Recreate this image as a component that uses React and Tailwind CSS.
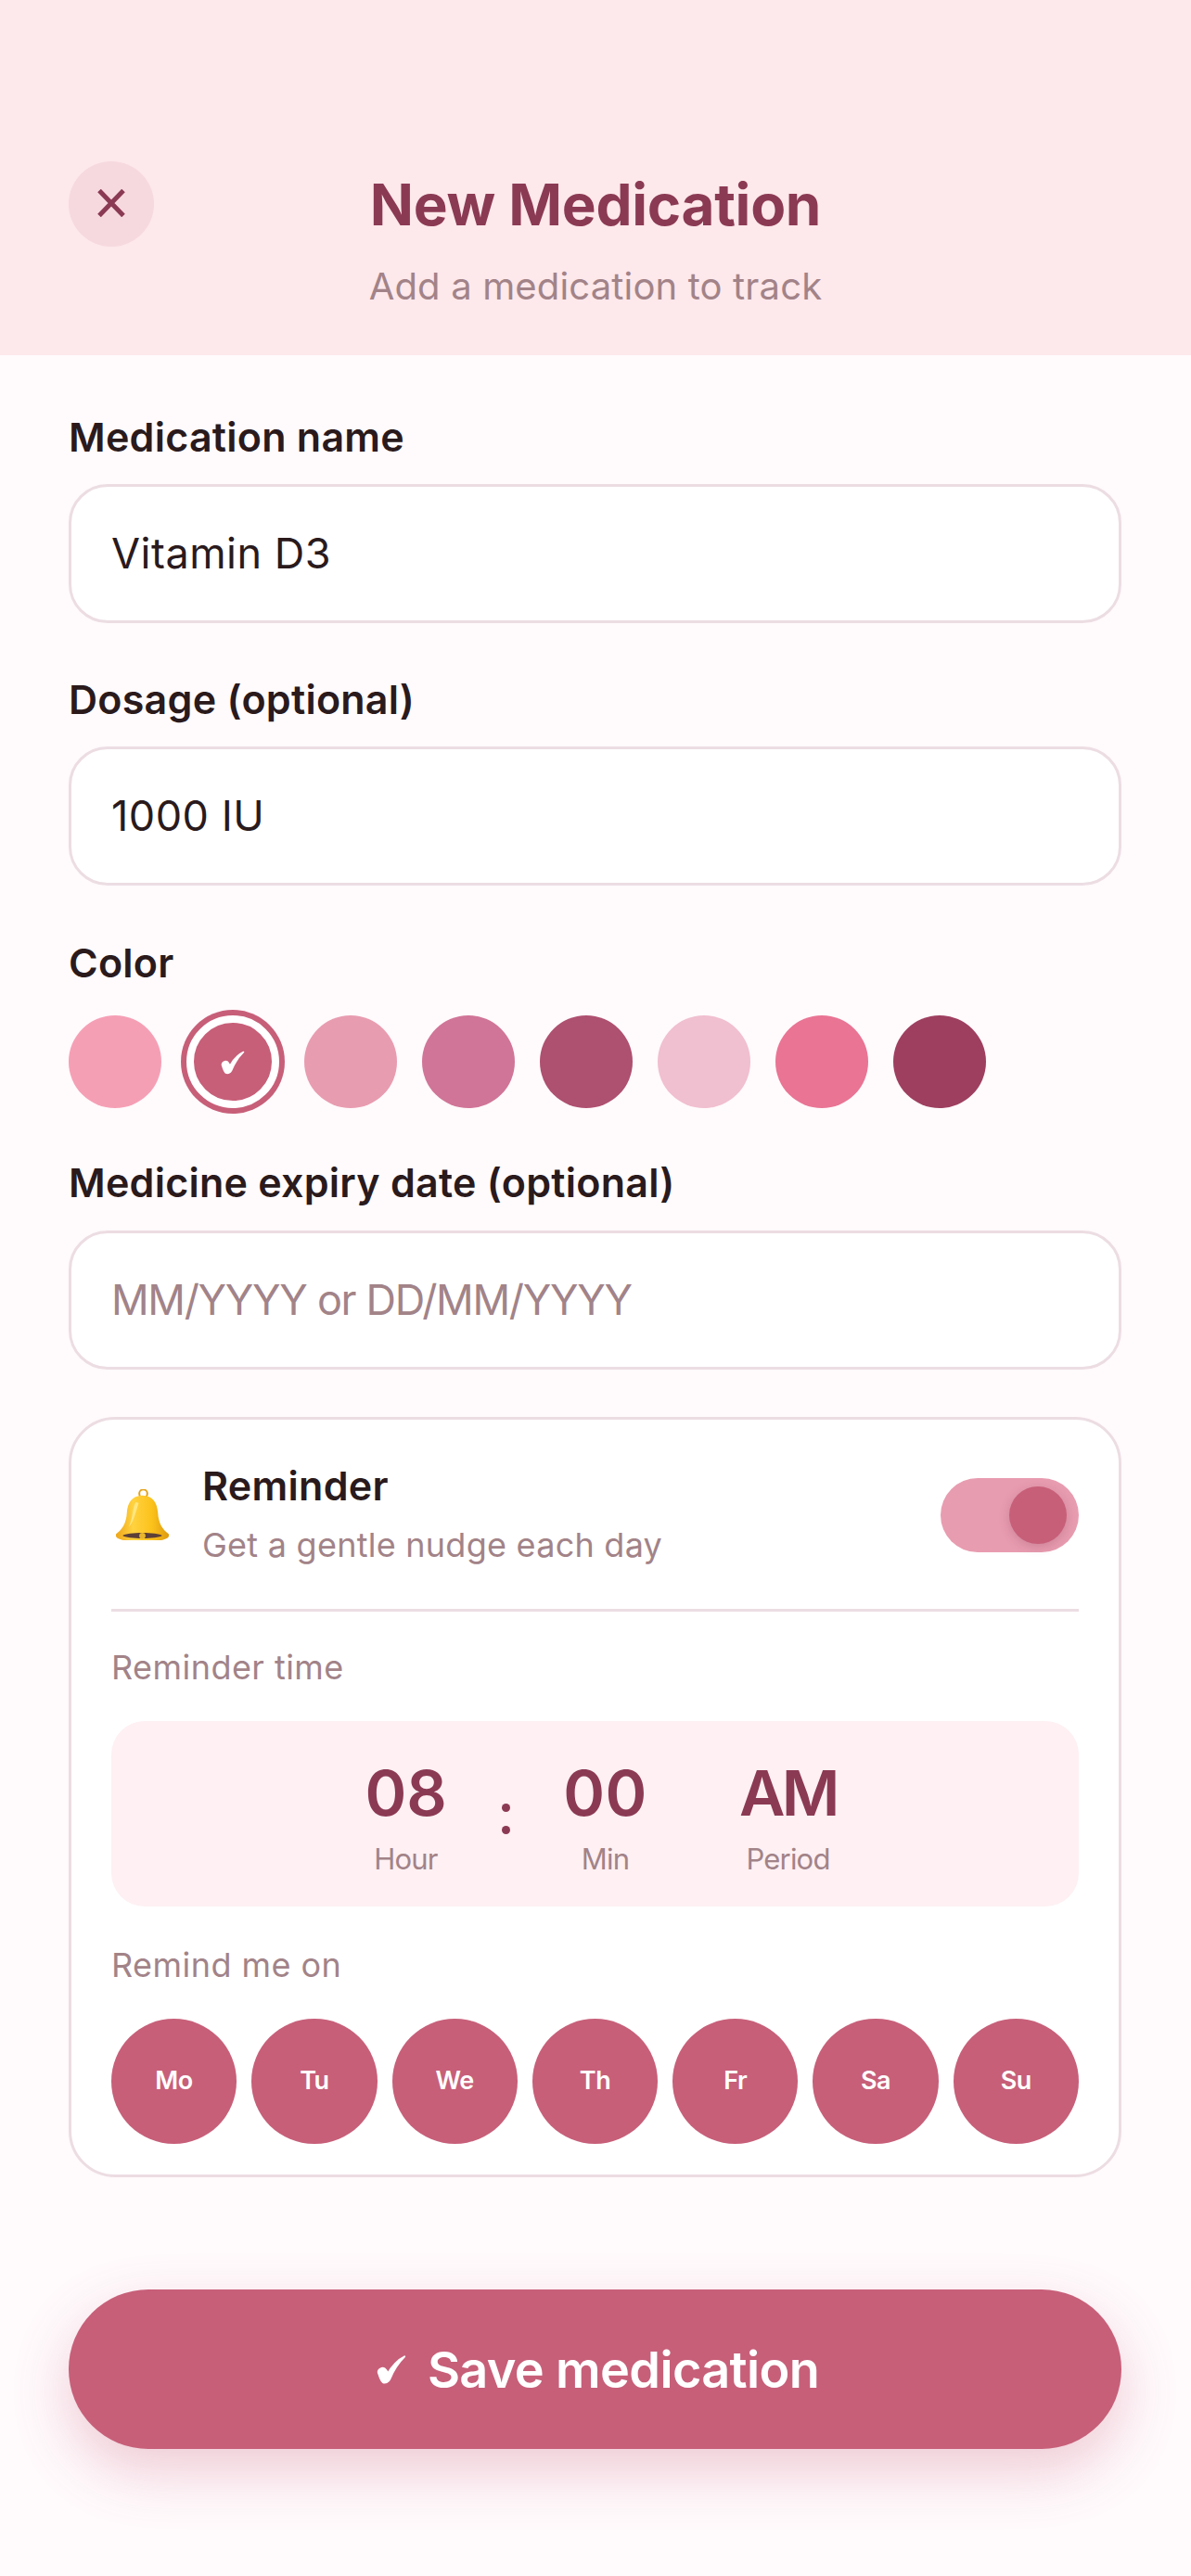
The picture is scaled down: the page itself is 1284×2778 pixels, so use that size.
const font = { fontFamily: '"Inter", "Noto Sans", sans-serif' };

const Label = ({ children, className = "" }) => (
  <div className={`h-[52px] flex items-center text-[43px] font-semibold tracking-[0.25px] text-[#2a1a1c] ${className}`}>{children}</div>
);

const Field = ({ value, placeholder, className = "mt-[25px]" }) => (
  <div className={`${className} h-[150px] rounded-[42px] border-[3px] border-[#ecdde3] bg-white px-[43px] flex items-center text-[45px] ${placeholder ? "tracking-[-1.3px] text-[#a28388]" : "tracking-[0.5px] text-[#2a1a1c]"}`}>
    {value || placeholder}
  </div>
);

const swatches = [
  ["#f59fb5", false], ["#c75f79", true], ["#e89cb0", false], ["#d07597", false],
  ["#ae5070", false], ["#f0bfd0", false], ["#e97494", false], ["#9e3f60", false],
];
const swatchClasses = {
  "#f59fb5": "bg-[#f59fb5]", "#c75f79": "bg-[#c75f79]", "#e89cb0": "bg-[#e89cb0]", "#d07597": "bg-[#d07597]",
  "#ae5070": "bg-[#ae5070]", "#f0bfd0": "bg-[#f0bfd0]", "#e97494": "bg-[#e97494]", "#9e3f60": "bg-[#9e3f60]",
};

const Check = ({ w, h, className = "" }) => (
  <svg width={w} height={h} viewBox="-1 -1 26 26" className={`shrink-0 ${className}`} fill="#ffffff" stroke="#ffffff" strokeWidth="1.6" strokeLinejoin="round">
    <path d="M23.500 0.500C18 6 13.500 13 10.500 20.500C9.500 23 6.500 24 4.500 23C2.500 21.500 1.500 17.500 0.500 14.500C0 11.500 4 10 6 11C7.500 12 8.200 14 8.800 15.500C12 9.500 18 3 23.500 0.500Z" />
  </svg>
);

const TimeCol = ({ value, label, tracking = "tracking-[-0.2px]" }) => (
  <div className="w-[130px] flex flex-col items-center">
    <div className={`h-[76px] flex items-center text-[68px] font-semibold ${tracking} text-[#8b3a54] whitespace-nowrap`}>{value}</div>
    <div className="mt-[16px] h-[36px] flex items-center text-[31px] tracking-[-0.8px] text-[#a28388] whitespace-nowrap">{label}</div>
  </div>
);

const Bell = () => (
  <svg width="59" height="55" viewBox="72 40 176 165" className="ml-[4px] shrink-0">
    <defs>
      <linearGradient id="b" x1="0" x2="1" y1="0" y2="0">
        <stop offset="0" stopColor="#eea51a" />
        <stop offset="0.32" stopColor="#ffd23f" />
        <stop offset="0.68" stopColor="#fcc21b" />
        <stop offset="1" stopColor="#dd9a10" />
      </linearGradient>
    </defs>
    <circle cx="163" cy="54" r="13" fill="none" stroke="#e2a016" strokeWidth="6" />
    <path d="M160 60C125 60 112 85 110 115C108 150 95 170 75 185C72 195 80 200 95 204C125 208 195 208 225 204C240 200 248 195 245 185C225 170 212 150 210 115C208 85 195 60 160 60Z" fill="url(#b)" />
    <path d="M138 82C126 105 130 135 116 162C130 150 140 110 148 84Z" fill="#ffe680" />
    <path d="M96 190C110 178 210 178 224 190C210 202 110 202 96 190Z" fill="#5d4037" />
    <circle cx="160" cy="191" r="10" fill="#e8b52e" />
  </svg>
);

export default function App() {
  return (
    <div style={font} className="min-h-[2778px] bg-[#fffafc]">
      <header className="h-[383px] bg-[#fde8eb] px-[74px] pt-[174px] grid grid-cols-[92px_1fr_92px]">
        <button className="w-[92px] h-[92px] rounded-full bg-[#f6d9df] flex items-center justify-center">
          <svg width="30" height="30" viewBox="0 0 30 30" fill="none" stroke="#8b3a54" strokeWidth="5" className="-translate-y-[1px]">
            <path d="M2 1.500 28 28.500M28 1.500 2 28.500" />
          </svg>
        </button>
        <div className="flex flex-col items-center">
          <div className="h-[92px] flex items-center text-[62px] font-bold tracking-[-0.3px] text-[#8b3a54]">New Medication</div>
          <div className="mt-[20px] h-[46px] flex items-center text-[40px] tracking-[0.15px] text-[#a28388]">Add a medication to track</div>
        </div>
        <div />
      </header>
      <main className="pl-[74px] pr-[75px] pt-[62px]">
        <Label>Medication name</Label>
        <Field value="Vitamin D3" />
        <Label className="mt-[56px]">Dosage (optional)</Label>
        <Field value="1000 IU" />
        <Label className="mt-[57px]">Color</Label>
        <div className="mt-[31px] flex gap-[27px]">
          {swatches.map(([c, sel]) => (
            <div key={c} className={`w-[100px] h-[100px] rounded-full flex items-center justify-center ${swatchClasses[c]} ${sel ? "border-[8px] border-white shadow-[0_0_0_6px_#c75f79]" : ""}`}>
              {sel && <Check w={26} h={26} className="translate-y-[1px]" />}
            </div>
          ))}
        </div>
        <Label className="mt-[54px]">Medicine expiry date (optional)</Label>
        <Field placeholder="MM/YYYY or DD/MM/YYYY" className="mt-[26px]" />
        <section className="mt-[51px] h-[820px] rounded-[50px] border-[3px] border-[#ecdde3] bg-white px-[43px] pt-[46px]">
          <div className="h-[113px] flex items-center">
            <Bell />
            <div className="ml-[35px] flex-1">
              <div className="h-[48px] flex items-center text-[43px] font-semibold tracking-[0.3px] text-[#2a1a1c]">Reminder</div>
              <div className="mt-[16px] h-[46px] flex items-center text-[36px] tracking-[0.25px] text-[#a28388]">Get a gentle nudge each day</div>
            </div>
            <div className="relative w-[149px] h-[80px] rounded-full bg-[#e89cb0]">
              <div className="absolute left-[74px] top-[9px] w-[62px] h-[62px] rounded-full bg-[#c75f79] shadow-[0_3px_12px_rgba(100,30,50,0.2)]" />
            </div>
          </div>
          <div className="mt-[45px] h-[3px] bg-[#ecdde3]" />
          <div className="mt-[38px] h-[44px] flex items-center text-[36px] tracking-[0.45px] text-[#a28388]">Reminder time</div>
          <div className="mt-[36px] h-[200px] rounded-[36px] bg-[#fef0f3] flex justify-center pt-[39px] pl-[4px]">
            <TimeCol value="08" label="Hour" />
            <div className="w-[85px] flex justify-center">
              <div className="mt-[50px] w-[9px] h-[33px] flex flex-col justify-between">
                <span className="w-[9px] h-[9px] rounded-full bg-[#8b3a54]" />
                <span className="w-[9px] h-[9px] rounded-full bg-[#8b3a54]" />
              </div>
            </div>
            <TimeCol value="00" label="Min" tracking="tracking-[0.5px]" />
            <div className="w-[67px]" />
            <TimeCol value="AM" label="Period" tracking="tracking-[-3.5px]" />
          </div>
          <div className="mt-[41px] h-[44px] flex items-center text-[36px] tracking-[0.45px] text-[#a28388]">Remind me on</div>
          <div className="mt-[36px] grid grid-cols-7 gap-[16px]">
            {["Mo", "Tu", "We", "Th", "Fr", "Sa", "Su"].map((d) => (
              <div key={d} className="h-[135px] rounded-full bg-[#c75f79] flex items-center justify-center text-[27px] font-semibold tracking-[-0.4px] text-white">{d}</div>
            ))}
          </div>
        </section>
        <button className="mt-[121px] w-full h-[172px] rounded-full bg-[#c75f79] shadow-[0_24px_60px_rgba(199,95,121,0.3)] pl-[6px] flex items-center justify-center text-[54px] font-semibold tracking-[-0.65px] text-white">
          <Check w={32} h={33} className="mr-[23px]" />Save medication
        </button>
      </main>
    </div>
  );
}
